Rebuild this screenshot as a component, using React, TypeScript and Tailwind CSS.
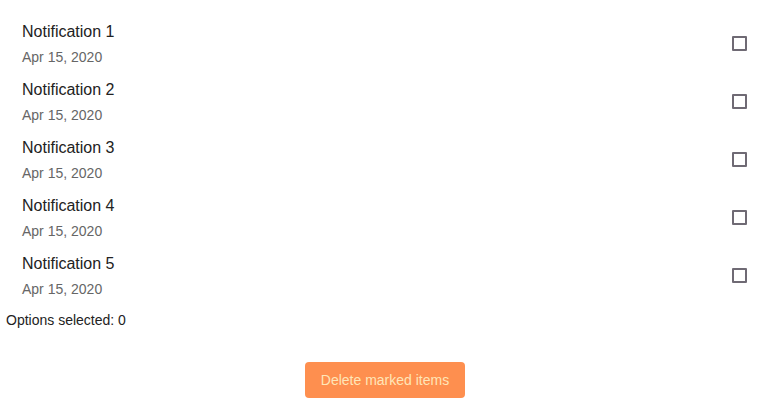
import { useState } from "react";

const items = [1, 2, 3, 4, 5].map((n) => ({
  id: n,
  title: `Notification ${n}`,
  date: "Apr 15, 2020",
}));

export default function App() {
  const [marked, setMarked] = useState<number[]>([]);

  const toggle = (id: number) => {
    setMarked((m) => (m.includes(id) ? m.filter((x) => x !== id) : [...m, id]));
  };

  return (
    <div className="min-h-[420px] bg-white pt-[15px] font-['Liberation_Sans',Arial,sans-serif]">
      <ul className="flex flex-col">
        {items.map((item) => (
          <li
            key={item.id}
            className="flex items-center justify-between pt-[5px] pb-[6px] pl-[22px] pr-[28px]"
          >
            <div className="flex flex-col">
              <span className="text-base leading-6 text-[#222]">{item.title}</span>
              <span className="mt-[3px] text-sm leading-5 text-[#666]">{item.date}</span>
            </div>
            <button
              onClick={() => toggle(item.id)}
              className="flex h-[15px] w-[15px] items-center justify-center rounded-[1px] border-2 border-[#6f6a74] bg-white"
            >
              {marked.includes(item.id) && (
                <span className="h-[7px] w-[7px] bg-[#6f6a74]" />
              )}
            </button>
          </li>
        ))}
      </ul>
      <p className="mt-[5px] pl-[6px] text-sm leading-5 text-[#222]">
        Options selected: {marked.length}
      </p>
      <div className="mt-[32px] flex justify-center pr-[5px]">
        <button className="h-9 w-40 rounded bg-[#fe8f4f] text-sm text-[#ffe6b8]">
          Delete marked items
        </button>
      </div>
    </div>
  );
}
